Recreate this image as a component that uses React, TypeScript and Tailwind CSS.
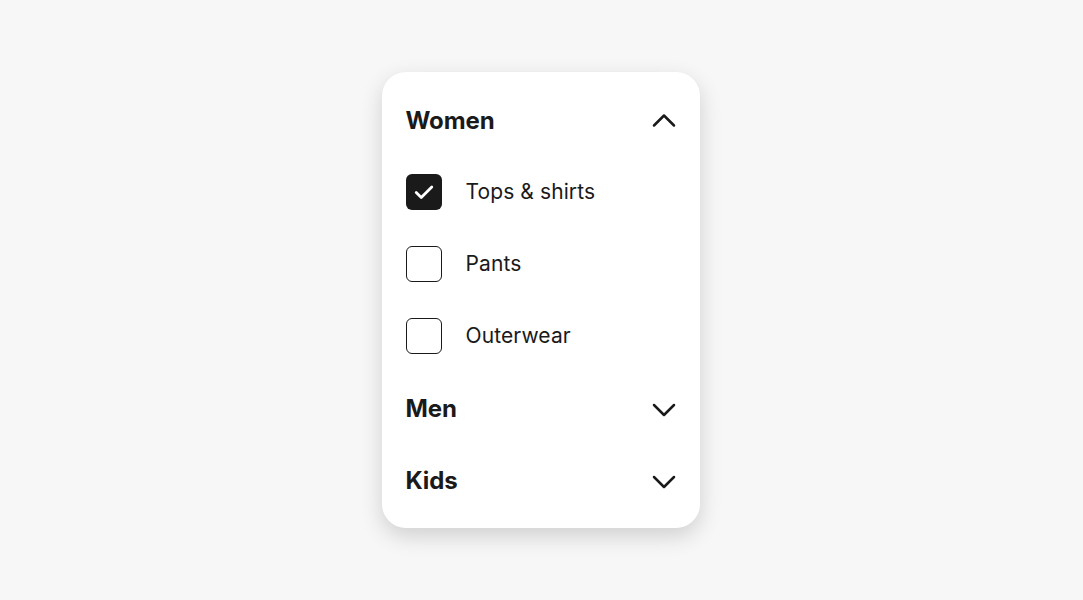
import { useState } from 'react'

type Section = { name: string; items: string[] }

const SECTIONS: Section[] = [
  { name: 'Women', items: ['Tops & shirts', 'Pants', 'Outerwear'] },
  { name: 'Men', items: ['Tops & shirts', 'Pants', 'Outerwear'] },
  { name: 'Kids', items: ['Tops & shirts', 'Pants', 'Outerwear'] },
]

function Chevron({ up }: { up: boolean }) {
  return (
    <svg width="24" height="24" viewBox="0 0 24 24" fill="none" stroke="#1a1a1a" strokeWidth="2.5" strokeLinecap="round" strokeLinejoin="round">
      {up ? <path d="M2 16.5 L12 6.5 L22 16.5" /> : <path d="M2 8 L12 18 L22 8" />}
    </svg>
  )
}

export default function App() {
  const [open, setOpen] = useState<string>('Women')
  const [checked, setChecked] = useState<Record<string, boolean>>({ 'Women/Tops & shirts': true })

  return (
    <main className="min-h-screen bg-[#f7f7f7] flex justify-center pt-[72px]" style={{ fontFamily: 'Inter, "Liberation Sans", sans-serif' }}>
      <div className="w-[318px] h-[456px] -translate-x-px bg-white rounded-[24px] shadow-[0_8px_22px_rgba(0,0,0,0.16)] py-3 px-6 text-[#1a1a1a]">
        {SECTIONS.map(section => {
          const isOpen = open === section.name
          return (
            <div key={section.name}>
              <button
                type="button"
                onClick={() => setOpen(isOpen ? '' : section.name)}
                className="w-full h-[72px] flex items-center justify-between pt-[2px]"
              >
                <span className="text-[24px] font-bold tracking-[-0.1px]">{section.name}</span>
                <Chevron up={isOpen} />
              </button>
              {isOpen &&
                section.items.map(item => {
                  const key = `${section.name}/${item}`
                  const on = !!checked[key]
                  return (
                    <label key={item} className="h-[72px] flex items-center gap-6 cursor-pointer">
                      <button
                        type="button"
                        onClick={() => setChecked(c => ({ ...c, [key]: !on }))}
                        className={`w-9 h-9 rounded-[6px] flex items-center justify-center ${
                          on ? 'bg-[#1a1a1a]' : 'border-[1.5px] border-[#1a1a1a] bg-white'
                        }`}
                      >
                        {on && (
                          <svg width="22" height="22" viewBox="0 0 24 24" fill="none" stroke="white" strokeWidth="3" strokeLinecap="round" strokeLinejoin="round">
                            <path d="M3.5 12.5 L9 18 L20.5 6.5" />
                          </svg>
                        )}
                      </button>
                      <span className="text-[21px] tracking-[0.1px]">{item}</span>
                    </label>
                  )
                })}
            </div>
          )
        })}
      </div>
    </main>
  )
}
